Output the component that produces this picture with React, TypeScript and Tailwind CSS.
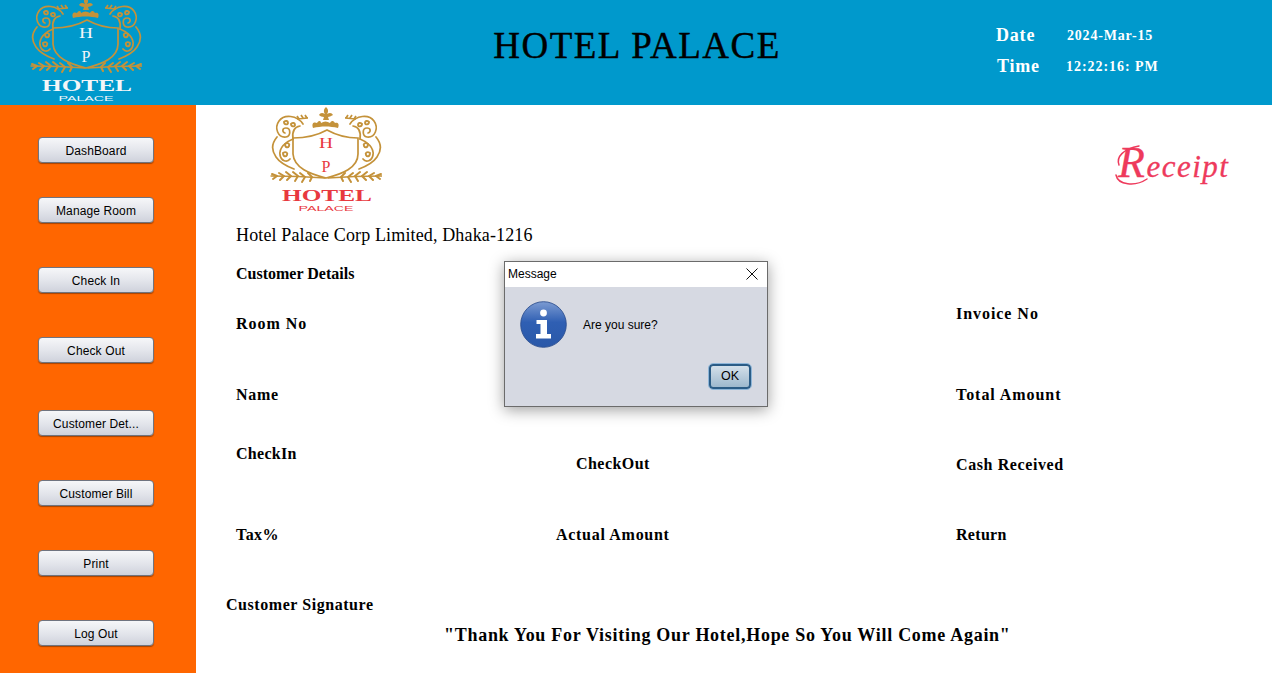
import React from "react";

const serif = "font-['Liberation_Serif',serif]";

function Logo({ text, box, cls }: { text: string; box: string; cls: string }) {
  const gold = "#c4923a";
  const Side = () => (
    <g fill="none" stroke={gold} strokeWidth="1.7" strokeLinecap="round">
      <path d="M33 14C27 5 14 4 9 11C4 18 8 28 16 27C21 26 21 18 16 18C12 18 12 22 15 23" />
      <path d="M23 29C15 32 9 38 10 45C11 51 17 53 20 49" />
      <path d="M7 27C2 33 1 40 6 47C10 53 16 56 24 59" />
      <path d="M30 16C24 17 22 22 23 29" />
      <path d="M15 34c3-2 5 0 4 2s-4 2-4-2zM13 43c3-2 5 0 4 2s-4 2-4-2zM21 14c2-2 4-1 4 1s-4 2-4-1zM14 12c2-2 4-1 4 1s-4 2-4-1z" strokeWidth="1.9" />
      <path d="M55 68C42 67 24 66 1 66" strokeWidth="1.3" />
      <path d="M7 66l-5-2M7 66l-4 3M14 66l-5-3M14 66l-4 4M21 66l-5-4M21 66l-4 4M28 66l-5-4M28 66l-3 5M35 67l-5-4M35 67l-3 5M42 67l-4-4M42 67l-2 4" strokeWidth="2" />
    </g>
  );
  return (
    <svg viewBox={box} className={cls}>
      <Side />
      <g transform="translate(113 0) scale(-1 1)">
        <Side />
      </g>
      <path d="M23 28C38 28 48 25 57 20C66 25 76 28 88 28L88 44C88 58 72 64 56 68C40 64 24 58 23 44Z" fill="none" stroke={gold} strokeWidth="1.7" />
      <path d="M43 18c-2-6 2-6 4-5c2-3 4-2 4 0c3-2 6-2 9 0c1-2 3-3 5 0c2-1 5 0 3 5c-8-2-17-2-25 0z" fill={gold} />
      <path d="M56 -3c2 2 3 4 1 7c3-2 5-1 6 1c-2 1-4 2-5 2l1 3h-6l1-3c-2 0-4-1-5-2c1-2 3-3 6-1c-2-3-1-5 1-7z" fill={gold} />
      <path d="M27 9l11-1M29 9l-2-3M33 8l-2-3M37 8l-2-3M86 9l-11-1M84 9l2-3M80 8l2-3M76 8l2-3" stroke={gold} strokeWidth="1.7" fill="none" />
      <text x="56" y="38" textAnchor="middle" fontSize="15" fontFamily="Liberation Serif" fill={text} textLength="14" lengthAdjust="spacingAndGlyphs">H</text>
      <text x="56" y="62" textAnchor="middle" fontSize="16" fontFamily="Liberation Serif" fill={text}>P</text>
      <text x="57" y="91" textAnchor="middle" fontSize="17" fontWeight="700" fontFamily="Liberation Serif" fill={text} textLength="90" lengthAdjust="spacingAndGlyphs">HOTEL</text>
      <text x="56" y="101" textAnchor="middle" fontSize="8" fontFamily="Liberation Sans" fill={text} textLength="55" lengthAdjust="spacingAndGlyphs">PALACE</text>
    </svg>
  );
}

function SideButton({ label, cls }: { label: string; cls: string }) {
  return (
    <button className={`w-[116px] h-[26px] shrink-0 rounded-[4px] border border-[#6f7480] bg-gradient-to-b from-[#f6f7f9] via-[#e4e6ec] to-[#cfd2dc] pt-[2px] text-[12px] tracking-[0.12px] text-black font-['Liberation_Sans',sans-serif] shadow-[0_1px_1px_rgba(0,0,0,0.35)] ${cls}`}>
      {label}
    </button>
  );
}

function Label({ children, cls = "", track = "tracking-[0.45px]" }: { children: React.ReactNode; cls?: string; track?: string }) {
  return <div className={`font-bold text-[16px] leading-[20px] text-black whitespace-nowrap ${track} ${cls}`}>{children}</div>;
}

function Dialog() {
  return (
    <div className="absolute left-[504px] top-[261px] w-[264px] h-[146px] border border-[#6b6b6b] bg-[#d6d9e2] shadow-[0_3px_14px_rgba(0,0,0,0.38)] font-['Liberation_Sans',sans-serif] flex flex-col">
      <div className="h-[25px] bg-white flex items-center justify-between pl-[3px] pr-[8px] pb-[2px] text-[12px] text-black">
        <span>Message</span>
        <svg width="14" height="14" viewBox="0 0 14 14" stroke="#111" strokeWidth="1" fill="none">
          <path d="M1.5 1.5L12.5 12.5M12.5 1.5L1.5 12.5" />
        </svg>
      </div>
      <div className="flex-1 flex flex-col pl-[15px] pr-[16px]">
        <div className="flex items-center gap-[16px] pt-[14px]">
          <svg width="47" height="47" viewBox="0 0 47 47">
            <defs>
              <linearGradient id="ig" x1="0" y1="0" x2="0" y2="1">
                <stop offset="0" stopColor="#7c9bd2" />
                <stop offset="0.45" stopColor="#2f5fb3" />
                <stop offset="1" stopColor="#2a58a8" />
              </linearGradient>
            </defs>
            <circle cx="23.5" cy="23.5" r="22.8" fill="url(#ig)" stroke="#2c4f90" strokeWidth="0.9" />
            <circle cx="23.5" cy="12" r="3.4" fill="#fff" />
            <path d="M16.5 19H27V33H31V37.5H16V33H20.5V23H16.5Z" fill="#fff" />
          </svg>
          <span className="text-[12px] text-black">Are you sure?</span>
        </div>
        <div className="flex justify-end mt-[16px]">
          <button className="w-[42px] h-[25px] rounded-[4px] border-2 border-[#2b5c86] outline outline-1 outline-[#8db5d8] bg-gradient-to-b from-[#d4e0ea] to-[#9db8cd] text-[12.5px] text-black">
            OK
          </button>
        </div>
      </div>
    </div>
  );
}

export default function App() {
  const wide = "tracking-[0.95px]";
  return (
    <div className={`relative w-[1272px] h-[673px] overflow-hidden bg-white flex flex-col ${serif}`}>
      <header className="h-[105px] shrink-0 bg-[#0099cc] flex text-white">
        <div className="w-[417px] pl-[30px]">
          <Logo text="#f4f6f8" box="0 0 112 105" cls="w-[112px] h-[105px]" />
        </div>
        <h1 className="w-[440px] pt-[24px] text-center text-[37px] leading-[44px] tracking-[1.5px] text-black [-webkit-text-stroke:0.4px_black]">HOTEL PALACE</h1>
        <div className="pl-[139px] pt-[25px] flex flex-col gap-[9px] font-bold">
          <div className="flex items-center h-[21px]">
            <span className="w-[71px] text-[18px] tracking-[0.8px]">Date</span>
            <span className="text-[14px] tracking-[0.8px]">2024-Mar-15</span>
          </div>
          <div className="flex items-center h-[21px] pt-[1px]">
            <span className="w-[70px] pl-[1px] text-[18px] tracking-[0.8px]">Time</span>
            <span className="text-[14px] tracking-[0.95px]">12:22:16: PM</span>
          </div>
        </div>
      </header>
      <div className="flex-1 flex min-h-0">
        <aside className="w-[196px] shrink-0 bg-[#ff6600] flex flex-col items-start pl-[38px] pt-[32px]">
          <SideButton label="DashBoard" cls="" />
          <SideButton label="Manage Room" cls="mt-[34px]" />
          <SideButton label="Check In" cls="mt-[44px]" />
          <SideButton label="Check Out" cls="mt-[44px]" />
          <SideButton label="Customer Det..." cls="mt-[47px]" />
          <SideButton label="Customer Bill" cls="mt-[44px]" />
          <SideButton label="Print" cls="mt-[44px]" />
          <SideButton label="Log Out" cls="mt-[44px]" />
        </aside>
        <main className="flex-1 relative pl-[40px] text-black">
          <div className="flex h-[110px] items-start">
            <div className="ml-[34px] pt-[2px]">
              <Logo text="#e8393f" box="0 -3 112 108" cls="w-[112px] h-[108px]" />
            </div>
            <div className="relative ml-[736px] mt-[36px] text-[#ee3a5c] italic font-normal text-[31px] leading-[44px] tracking-[1.5px] whitespace-nowrap [-webkit-text-stroke:0.3px_#ee3a5c]">
              <span className="text-[44px] leading-[44px]">R</span>eceipt
              <svg className="absolute left-[-3px] top-[2px]" width="44" height="46" viewBox="0 0 44 46" fill="none" stroke="#ee3a5c" strokeWidth="1.5" strokeLinecap="round">
                <path d="M4 22C1 14 8 6 24 3" />
                <path d="M1 32C3 42 20 44 32 36" />
              </svg>
            </div>
          </div>
          <div className="mt-[9px] text-[18px] leading-[22px] tracking-[0.14px]">Hotel Palace Corp Limited, Dhaka-1216</div>
          <Label cls="mt-[18px]" track="tracking-[0px]">Customer Details</Label>
          <div className="mt-[20px] grid grid-cols-[320px_400px_1fr]">
            <Label cls="mt-[10px]" track={wide}>Room No</Label>
            <div />
            <Label track={wide}>Invoice No</Label>
          </div>
          <div className="mt-[51px] grid grid-cols-[320px_400px_1fr]">
            <Label track="tracking-[0.7px]">Name</Label>
            <div />
            <Label track={wide}>Total Amount</Label>
          </div>
          <div className="mt-[39px] grid grid-cols-[320px_400px_1fr]">
            <Label track="tracking-[0.3px]">CheckIn</Label>
            <Label cls="mt-[10px] pl-[20px]">CheckOut</Label>
            <Label cls="mt-[11px]" track="tracking-[0.6px]">Cash Received</Label>
          </div>
          <div className="mt-[50px] grid grid-cols-[320px_400px_1fr]">
            <Label>Tax%</Label>
            <Label track="tracking-[0.7px]">Actual Amount</Label>
            <Label track="tracking-[0.3px]">Return</Label>
          </div>
          <Label cls="mt-[50px] -ml-[10px]" track="tracking-[0.55px]">Customer Signature</Label>
          <div className="mt-[9px] ml-[208px] font-bold text-[18px] leading-[22px] tracking-[0.72px] whitespace-nowrap">"Thank You For Visiting Our Hotel,Hope So You Will Come Again"</div>
        </main>
      </div>
      <Dialog />
    </div>
  );
}
